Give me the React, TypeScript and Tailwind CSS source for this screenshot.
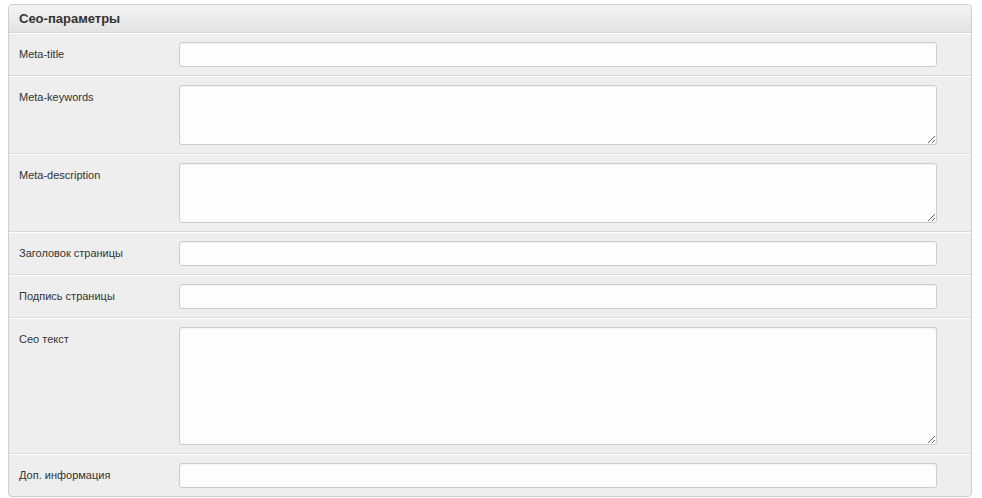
import { FC } from "react";

type FieldT = { label: string; height?: string };

const fields: FieldT[] = [
  { label: "Meta-title" },
  { label: "Meta-keywords", height: "h-[60px]" },
  { label: "Meta-description", height: "h-[60px]" },
  { label: "Заголовок страницы" },
  { label: "Подпись страницы" },
  { label: "Сео текст", height: "h-[118px]" },
  { label: "Доп. информация" },
];

const Row: FC<{ field: FieldT; last: boolean }> = ({ field, last }) => {
  return (
    <div
      className={
        "flex items-start pl-[10px] pr-[34px] py-[8px] border-t border-t-white " +
        (last ? "" : "border-b border-b-[#dadada]")
      }
    >
      <label className="w-[160px] shrink-0 text-[11px] leading-[25px] text-[#333]">
        {field.label}
      </label>
      {field.height ? (
        <textarea
          className={
            "flex-1 block rounded-[3px] border border-[#ccc] bg-[#fdfdfd] shadow-[inset_0_1px_1px_rgba(0,0,0,0.05)] outline-none " +
            field.height
          }
        />
      ) : (
        <input
          type="text"
          className="flex-1 block h-[25px] rounded-[3px] border border-[#ccc] bg-[#fdfdfd] shadow-[inset_0_1px_1px_rgba(0,0,0,0.05)] outline-none"
        />
      )}
    </div>
  );
};

const App: FC = () => {
  return (
    <div className="w-[982px] h-[498px] bg-white pt-[4px] pl-[8px] font-['Liberation_Sans',Arial,sans-serif]">
      <div className="w-[964px] rounded-[4px] border border-[#cfcfcf] bg-[#eee] overflow-hidden">
        <div className="h-[28px] flex items-center pl-[10px] bg-gradient-to-b from-[#f4f4f4] to-[#e3e3e3] border-b border-[#d5d5d5]">
          <h2 className="font-bold text-[13px] text-[#333]">Сео-параметры</h2>
        </div>
        {fields.map((field, i) => (
          <Row key={field.label} field={field} last={i === fields.length - 1} />
        ))}
      </div>
    </div>
  );
};

export default App;
